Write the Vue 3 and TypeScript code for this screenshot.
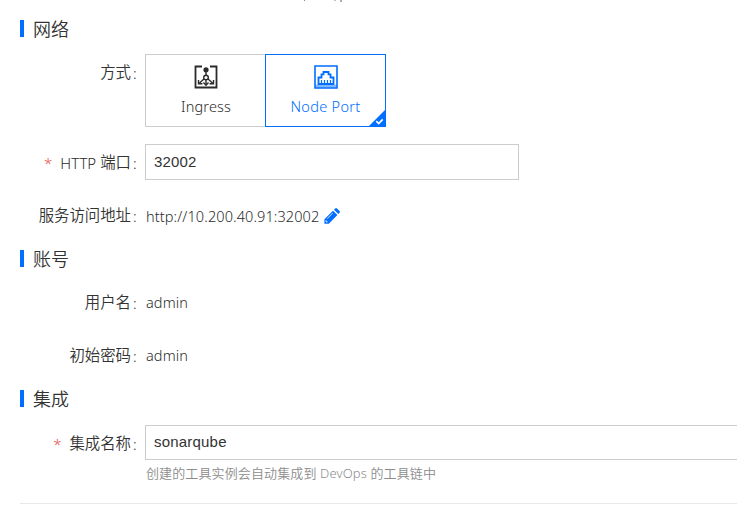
<script setup lang="ts">
import { ref } from 'vue'

type Mode = 'ingress' | 'nodeport'

const mode = ref<Mode>('nodeport')
const port = ref('32002')
const name = ref('sonarqube')
const address = 'http://10.200.40.91:32002'
const accounts = [
  { label: '用户名', value: 'admin' },
  { label: '初始密码', value: 'admin' },
]
</script>

<template>
  <main class="page">
    <div class="edge"><i class="tick" /><i class="tick warm" /><i class="tick tall" /></div>

    <section class="network">
      <h2 class="title"><span>网络</span></h2>
      <div class="row modes-row">
        <div class="label"><span class="cn">方式</span><span class="colon">:</span></div>
        <div class="modes">
          <button class="mode" :class="{ active: mode === 'ingress' }" @click="mode = 'ingress'">
            <svg class="mode-icon" viewBox="0 0 24 24" fill="none" stroke="currentColor">
              <path d="M8 1.5H1.5v21h21v-21H16" stroke-width="1.8" />
              <circle cx="12" cy="4.8" r="2.6" fill="currentColor" stroke="none" />
              <path d="M12 7v4M10.2 13.8 5 18.4M13.8 13.8l5.2 4.6M12 14v5.5" stroke-width="1.4" />
              <circle cx="12" cy="12.5" r="2.3" stroke-width="1.4" />
              <path d="M4.5 15v3.7h4M19.5 15v3.7h-4M9.5 17.5l2.5 2.7 2.5-2.7" stroke-width="1.4" />
            </svg>
            <span class="mode-name">Ingress</span>
          </button>
          <button class="mode" :class="{ active: mode === 'nodeport' }" @click="mode = 'nodeport'">
            <svg class="mode-icon" viewBox="0 0 24 24" fill="none" stroke="currentColor">
              <path d="M1 1h22v22H1z" stroke-width="1.6" />
              <path d="M1.5 21.2h21" stroke-width="3" opacity=".5" />
              <path d="M4.5 19v-6.5h3V9.3h2V7h5v2.3h2v3.2h3V19z" stroke-width="1.8" />
              <path d="M7.5 15v4M10.5 15v4M13.5 15v4M16.5 15v4" stroke-width="1.2" />
            </svg>
            <span class="mode-name node">Node Port</span>
            <svg v-if="mode === 'nodeport'" class="corner" viewBox="0 0 18 18">
              <path d="M18 0v18H0z" fill="#006eff" />
              <path d="m8.3 12.2 2.4 2.3 4-4.2" fill="none" stroke="#fff" stroke-width="1.7" />
            </svg>
          </button>
        </div>
      </div>
      <div class="row port-row">
        <div class="label"><span class="star">*</span><span class="latin">HTTP</span><span class="cn">端口</span><span class="colon">:</span></div>
        <input v-model="port" class="field short" />
      </div>
      <div class="row address-row">
        <div class="label"><span class="cn">服务访问地址</span><span class="colon">:</span></div>
        <span class="value url">{{ address }}</span>
        <svg class="pencil" viewBox="0 0 16 16" fill="#006eff">
          <path d="M.4 15.7v-4.4L9 2.7l4.4 4.4-8.6 8.6zM10 1.7l1.2-1.2q.9-.8 1.8 0l2.5 2.5q.9.9 0 1.8l-1.2 1.3z" />
          <path d="m3.1 10.7 5.5-5.5M2 12.2v1.7h1.7" fill="none" stroke="#fff" stroke-width=".8" />
        </svg>
      </div>
    </section>

    <section class="account">
      <h2 class="title"><span>账号</span></h2>
      <div v-for="item in accounts" :key="item.label" class="row account-row">
        <div class="label"><span class="cn">{{ item.label }}</span><span class="colon">:</span></div>
        <span class="value">{{ item.value }}</span>
      </div>
    </section>

    <section class="integration">
      <h2 class="title"><span>集成</span></h2>
      <div class="row name-row">
        <div class="label"><span class="star">*</span><span class="cn">集成名称</span><span class="colon">:</span></div>
        <input v-model="name" class="field long" />
      </div>
      <p class="help">创建的工具实例会自动集成到 DevOps 的工具链中</p>
    </section>
  </main>
</template>

<style>
body {
  background: #fff;
}
</style>

<style scoped>
* {
  box-sizing: border-box;
}
.page {
  height: 506px;
  padding-left: 20px;
  overflow: hidden;
  color: #2b2b2b;
  font: 350 15px/20px "Noto Sans", "Noto Sans CJK SC", sans-serif;
}
.edge {
  display: flex;
  height: 20px;
  padding-left: 284px;
}
.tick {
  width: 1px;
  height: 1px;
  margin-right: 29px;
  background: #8c8496;
}
.tick.warm {
  width: 2px;
  margin-right: 4px;
  background: #d5b9a5;
}
.tick.tall {
  width: 2px;
  height: 2px;
  background: #b6aaa8;
}
.title {
  display: flex;
  align-items: center;
  height: 17px;
  margin: 0;
  padding-left: 9px;
  border-left: 4px solid #006eff;
  color: #333;
  font-size: 18px;
  font-weight: 350;
  line-height: 24px;
}
.row {
  display: flex;
  align-items: center;
}
.label {
  display: flex;
  flex: none;
  align-items: center;
  justify-content: flex-end;
  width: 125px;
  padding-right: 8px;
  white-space: nowrap;
}
.cn {
  color: #333;
  font-size: 15.4px;
}
.colon {
  width: 6px;
  padding-left: 2px;
}
.star {
  margin-right: 8px;
  color: #e1504a;
}
.latin {
  margin-right: 4px;
}
.modes-row {
  align-items: flex-start;
  height: 73px;
  margin-top: 17px;
}
.modes-row .label {
  padding-top: 9px;
}
.modes {
  display: flex;
}
.mode {
  position: relative;
  display: flex;
  flex-direction: column;
  align-items: center;
  width: 121px;
  height: 73px;
  padding: 10px 0 0;
  border: 1px solid #ccc;
  background: #fff;
  color: #2b2b2b;
  font: inherit;
}
.mode + .mode {
  margin-left: -1px;
}
.mode.active {
  z-index: 1;
  border-color: #006eff;
  color: #006eff;
}
.mode-icon {
  width: 24px;
  height: 24px;
}
.mode-name {
  margin-top: 7px;
  padding-left: 1px;
  font-size: 14.5px;
  letter-spacing: 0.15px;
}
.mode-name.node {
  padding-left: 0;
  letter-spacing: 0.3px;
}
.corner {
  position: absolute;
  right: -1px;
  bottom: -1px;
  width: 18px;
  height: 18px;
}
.field {
  height: 36px;
  padding: 0 8px 2px;
  border: 1px solid #ccc;
  border-radius: 0;
  outline: none;
  background: #fff;
  color: #333;
  font: 400 15px "Liberation Sans", sans-serif;
}
.short {
  width: 374px;
  letter-spacing: 0.15px;
}
.long {
  flex: none;
  width: 620px;
  height: 35px;
  letter-spacing: 0.2px;
}
.port-row {
  height: 36px;
  margin-top: 17px;
}
.port-row .label,
.name-row .label {
  padding-top: 2px;
}
.address-row {
  height: 20px;
  margin-top: 26px;
}
.value {
  padding-left: 1px;
  padding-bottom: 2px;
  font-size: 14.5px;
  letter-spacing: 0.1px;
}
.url {
  width: 174px;
  padding-bottom: 0;
  white-space: nowrap;
}
.pencil {
  width: 16px;
  height: 16px;
  margin-left: 5px;
}
.account {
  margin-top: 24px;
}
.account-row {
  height: 20px;
  margin-top: 26px;
}
.account-row + .account-row {
  margin-top: 33px;
}
.integration {
  height: 114px;
  margin-top: 24px;
  border-bottom: 1px solid #e8e8e8;
}
.name-row {
  height: 35px;
  margin-top: 18px;
}
.help {
  margin: 3px 0 0 126px;
  color: #8c8c8c;
  font-size: 13px;
  letter-spacing: 0.12px;
  white-space: nowrap;
}
</style>
